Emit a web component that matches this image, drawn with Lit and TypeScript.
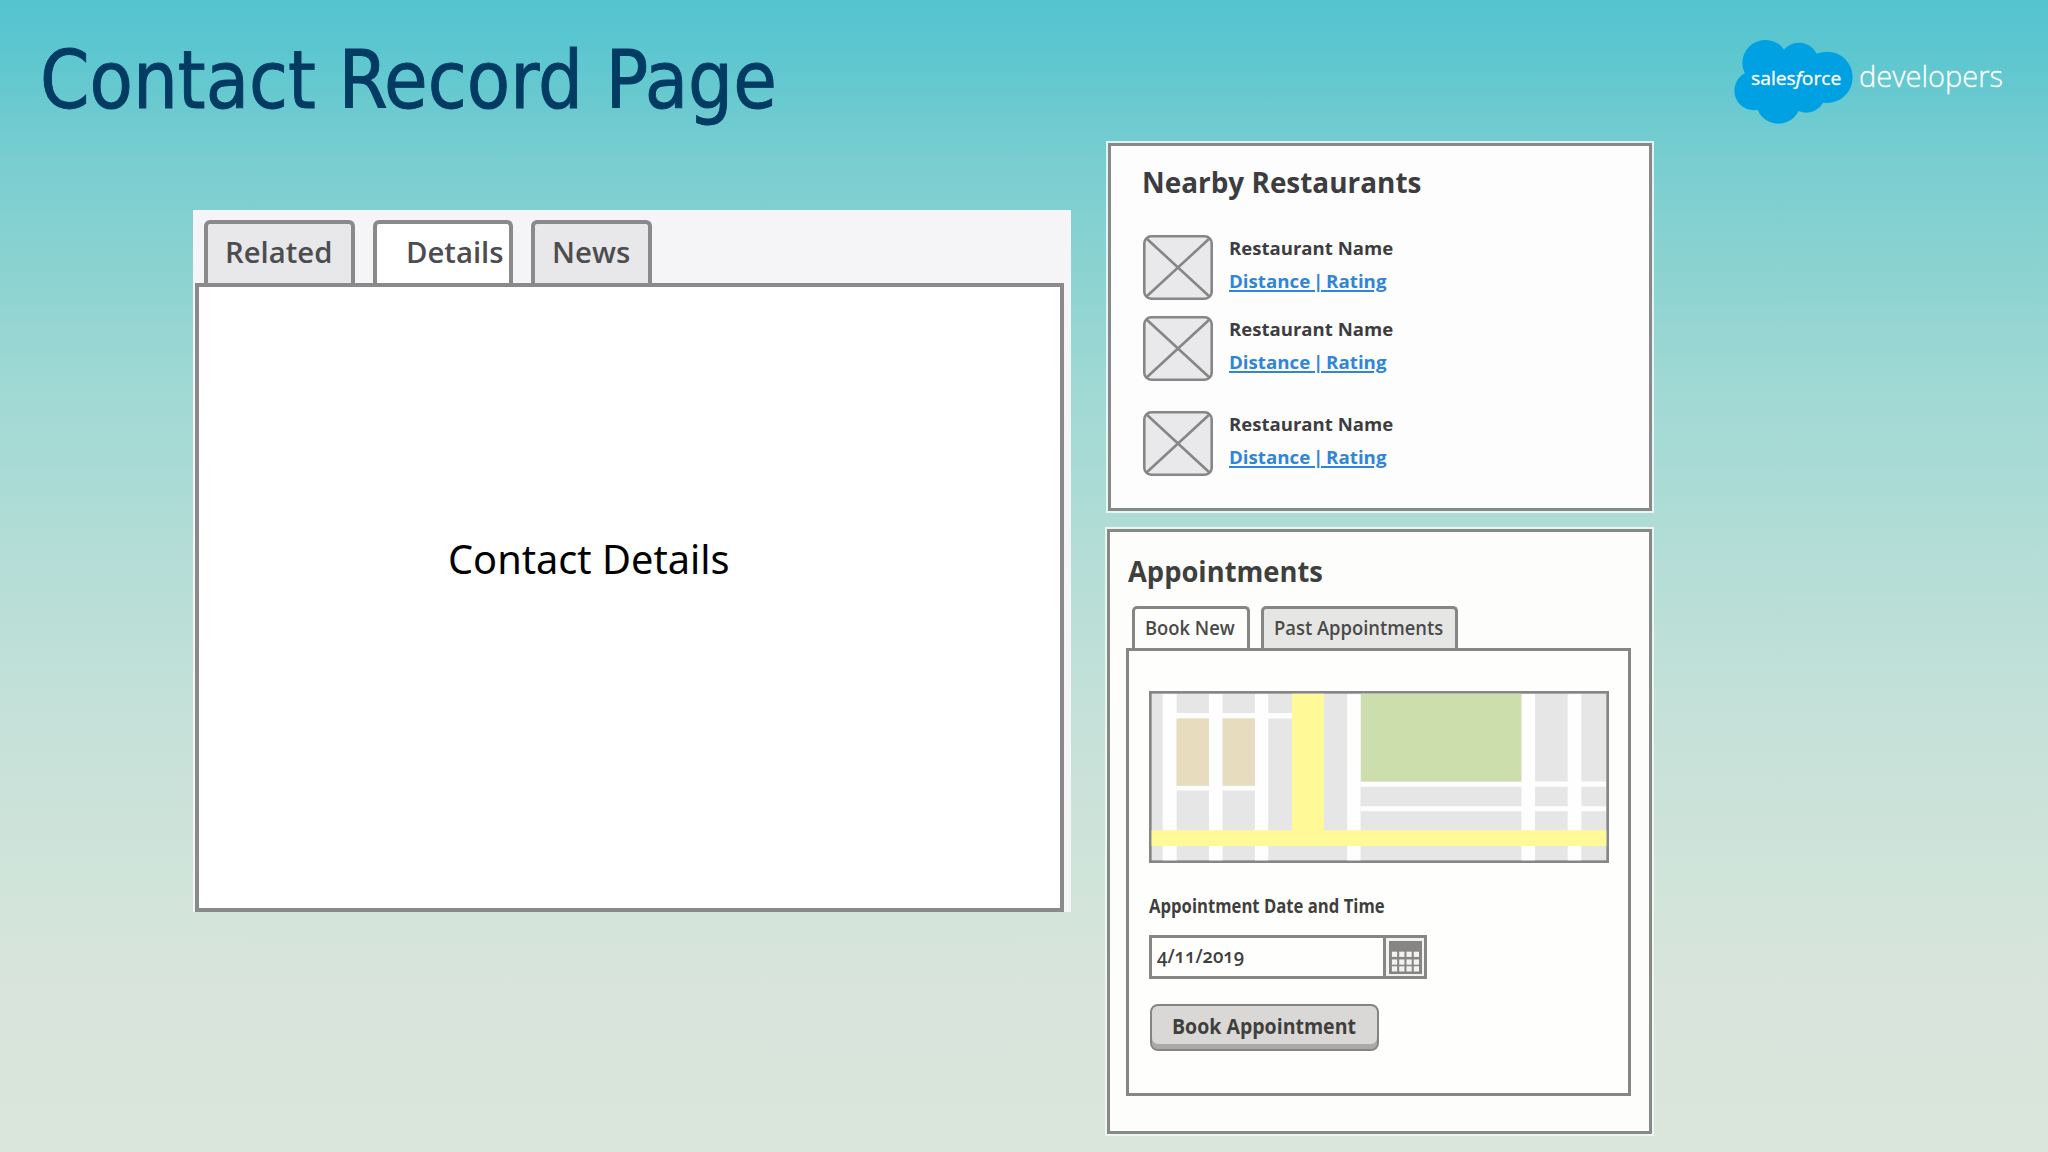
import { LitElement, html, svg, css } from "lit";
import { customElement, property } from "lit/decorators.js";

/** Single line of text, stretched horizontally to fill a given width. */
@customElement("fit-text")
class FitText extends LitElement {
  @property({ type: Number }) width = 100;
  @property() text = "";

  static styles = css`
    :host { display: block; white-space: pre; }
    .ink { display: inline-block; transform-origin: 0 50%; vertical-align: top; text-decoration: inherit; text-underline-offset: inherit; }
  `;

  updated() {
    const ink = this.renderRoot.querySelector(".ink") as HTMLElement;
    ink.style.transform = `scaleX(${this.width / ink.offsetWidth})`;
    this.style.width = `${this.width}px`;
  }

  render() {
    return html`<span class="ink">${this.text}</span>`;
  }
}

/** Salesforce Developers logo. */
@customElement("brand-logo")
class BrandLogo extends LitElement {
  static styles = css`
    :host { display: flex; }
    .cloud { display: block; width: 121px; height: 86px; }
    .shape { fill: #00a1e3; }
    .word { fill: #fff; stroke: #fff; stroke-width: 1; font: 500 57px "Open Sans", "Noto Sans", sans-serif; }
    .slant { font-style: italic; }
    .product { margin: 19px 0 0 5px; color: #fff; font: 300 29px/36px "Open Sans", "Noto Sans", sans-serif; -webkit-text-stroke: 0.3px #fff; }
  `;
  render() {
    return html`
      <svg class="cloud" viewBox="100 58 363 258">
        <g class="shape">
          <circle cx="197" cy="130" r="69" />
          <circle cx="298" cy="128" r="59" />
          <circle cx="382" cy="173" r="77" />
          <circle cx="163" cy="213" r="59" />
          <circle cx="236" cy="245" r="67" />
          <circle cx="320" cy="222" r="57" />
          <path d="M150 140L300 110L390 170L320 240L230 250L150 220Z" />
        </g>
        <text class="word" x="154" y="195" textLength="271" lengthAdjust="spacingAndGlyphs">sales<tspan class="slant">f</tspan>orce</text>
      </svg>
      <fit-text class="product" width="144" text="developers"></fit-text>
    `;
  }
}

/** Record card with the Related / Details / News tabs. */
@customElement("record-tabs")
class RecordTabs extends LitElement {
  static styles = css`
    :host { display: flex; flex-direction: column; box-sizing: border-box; width: 878px; height: 702px; padding: 10px 7px 0 2px; background: #f5f4f7; }
    .tabs { display: flex; padding-left: 9px; height: 63px; }
    .tab { box-sizing: border-box; height: 63px; border: 4px solid #8a8a8b; border-bottom: 0; border-radius: 6px 6px 0 0; background: #e8e7ea; color: #4d4d50; font: 600 29px/36px "Open Sans", "Noto Sans", sans-serif; padding-top: 10px; }
    .related { width: 151px; padding-left: 17px; }
    .details { width: 140px; margin-left: 18px; padding-left: 29px; background: #fff; }
    .news { width: 121px; margin-left: 18px; padding-left: 17px; }
    .panel { box-sizing: border-box; flex: 1; border: 4px solid #8a8a8b; background: #fff; color: #000; font: 400 40px/50px "Noto Sans", sans-serif; padding: 247px 0 0 249px; }
  `;
  render() {
    return html`
      <div class="tabs">
        <div class="tab related"><fit-text width="107" text="Related"></fit-text></div>
        <div class="tab details"><fit-text width="98" text="Details"></fit-text></div>
        <div class="tab news"><fit-text width="78" text="News"></fit-text></div>
      </div>
      <div class="panel"><fit-text width="282" text="Contact Details"></fit-text></div>
    `;
  }
}

@customElement("nearby-restaurants")
class NearbyRestaurants extends LitElement {
  static styles = css`
    :host { display: block; box-sizing: border-box; width: 544px; height: 368px; border: 3px solid #89898a; box-shadow: 0 0 0 2px rgba(240, 250, 250, 0.85); background: #fdfdfe; padding: 18px 0 0 32px; font-family: "Open Sans", "Noto Sans", sans-serif; }
    .title { color: #3d3d3f; font-size: 28px; font-weight: 700; line-height: 36px; margin: 0 0 35px -1px; }
    .row { display: flex; gap: 16px; height: 65px; margin-bottom: 16px; }
    .row.spaced { margin-top: 30px; }
    .thumb { display: block; width: 70px; height: 65px; margin-left: -0.5px; }
    .box { fill: #e9e8ea; stroke: #868687; stroke-width: 2.6; }
    .cross { stroke: #868687; stroke-width: 2.6; }
    .name { color: #3d3d3f; font-size: 18px; font-weight: 700; line-height: 26px; }
    .link { color: #2f86d6; font-size: 18px; font-weight: 700; line-height: 26px; margin-top: 7px; word-spacing: -2px; text-decoration: underline 1.6px; text-underline-offset: 2px; }
    .copy { display: flex; flex-direction: column; }
  `;
  render() {
    return html`
      <fit-text class="title" width="279" text="Nearby Restaurants"></fit-text>
      ${[false, false, true].map(
        (spaced) => html`
          <div class="row ${spaced ? "spaced" : ""}">
            <svg class="thumb" viewBox="0 0 70 65">
              <rect class="box" x="1.3" y="1.3" width="67.4" height="62.4" rx="7" />
              <path class="cross" d="M3 3L67 62M67 3L3 62" />
            </svg>
            <div class="copy">
              <fit-text class="name" width="164" text="Restaurant Name"></fit-text>
              <fit-text class="link" width="158" text="Distance | Rating"></fit-text>
            </div>
          </div>
        `
      )}
    `;
  }
}

@customElement("street-map")
class StreetMap extends LitElement {
  static styles = css`
    :host { display: block; }
    .map { display: block; width: 460px; height: 172px; }
    .land { fill: #e7e6e6; stroke: #868686; stroke-width: 8; }
    .street { fill: #fefefe; }
    .avenue { fill: #fff998; }
    .block { fill: #e7dcbe; }
    .park { fill: #ccdeab; }
  `;
  render() {
    const streets = [[96, 42], [235, 41], [373, 40], [650, 40], [1173, 41], [1312, 41]];
    return html`
      <svg class="map" viewBox="55 63 1381 515" preserveAspectRatio="none">
        <rect class="land" x="59" y="67" width="1373" height="507" />
        ${streets.map(([x, w]) => svg`<rect class="street" x=${x} y="72" width=${w} height="498" />`)}
        <path class="street" d="M138 129H485V145H138ZM138 347H373V361H138ZM690 334H1427V350H690ZM690 408H1427V423H690Z" />
        <path class="block" d="M138 145H235V347H138ZM276 145H373V347H276Z" />
        <rect class="park" x="692" y="71" width="481" height="263" />
        <path class="avenue" d="M484 71H580V480H1428V527H63V480H484Z" />
      </svg>
    `;
  }
}

@customElement("appointments-card")
class AppointmentsCard extends LitElement {
  static styles = css`
    :host { display: block; box-sizing: border-box; width: 545px; height: 605px; border: 3px solid #868986; box-shadow: 0 0 0 2px rgba(240, 250, 246, 0.85); background: #fdfefc; font-family: "Open Sans", "Noto Sans", sans-serif; padding: 20px 0 0 16px; color: #3f3f3e; }
    .title { font-size: 29px; font-weight: 700; line-height: 38px; padding-left: 2px; }
    .tabs { display: flex; gap: 11px; padding: 16px 0 0 6px; height: 42px; }
    .tab { box-sizing: border-box; height: 42px; border: 3px solid #868686; border-bottom: 0; border-radius: 5px 5px 0 0; padding: 6px 0 0 10px; font-size: 20px; font-weight: 600; line-height: 26px; color: #4a4a4a; }
    .new { width: 118px; }
    .past { width: 197px; background: #e6e6e5; }
    .panel { box-sizing: border-box; width: 505px; height: 448px; border: 3px solid #868686; background: #fefefd; padding: 40px 0 0 20px; }
    .label { font-size: 19px; font-weight: 700; line-height: 26px; margin-top: 30px; }
    .field { display: flex; box-sizing: border-box; width: 278px; height: 44px; margin-top: 16px; border: 3px solid #868686; }
    .date { width: 231px; box-sizing: border-box; padding: 4px 0 0 5px; font-size: 20px; font-weight: 600; line-height: 28px; font-feature-settings: "onum" 1; }
    .picker { width: 38px; border-left: 3px solid #868686; background: #f2f2f1; display: flex; align-items: center; justify-content: center; }
    .calendar { display: block; width: 33px; height: 33px; }
    .frame { fill: #868584; }
    .cell { fill: #f2f2f1; }
    .button { display: flex; align-items: flex-start; box-sizing: border-box; width: 229px; height: 47px; margin: 25px 0 0 1px; border: 2.5px solid #868584; border-radius: 8px; background: #d9d8d7; box-shadow: inset 0 -5px 0 #aaa9a8; padding: 6px 0 0 20px; color: #3f3f3e; font-family: inherit; font-size: 21px; font-weight: 700; line-height: 28px; text-align: left; }
  `;
  render() {
    return html`
      <fit-text class="title" width="195" text="Appointments"></fit-text>
      <div class="tabs">
        <div class="tab new"><fit-text width="90" text="Book New"></fit-text></div>
        <div class="tab past"><fit-text width="169" text="Past Appointments"></fit-text></div>
      </div>
      <div class="panel">
        <street-map></street-map>
        <fit-text class="label" width="236" text="Appointment Date and Time"></fit-text>
        <div class="field">
          <div class="date"><fit-text width="87" text="4/11/2019"></fit-text></div>
          <div class="picker">
            <svg class="calendar" viewBox="0 0 34 34">
              <rect class="frame" width="34" height="34" />
              ${[11, 19, 26].map((y) => [3, 10.5, 18, 25.5].map((x) => svg`<rect class="cell" x=${x} y=${y} width="5.4" height="5.4" />`))}
            </svg>
          </div>
        </div>
        <button class="button"><fit-text width="184" text="Book Appointment"></fit-text></button>
      </div>
    `;
  }
}

@customElement("app-root")
class AppRoot extends LitElement {
  static styles = css`
    :host { display: block; }
    .slide { box-sizing: border-box; width: 2048px; height: 1152px; overflow: hidden; background: linear-gradient(#54c4cf 0%, #5bc6cf 4%, #7bced0 15%, #8fd4d1 25.5%, #9fd8d4 33%, #afdcd6 45%, #bbdfd7 54%, #c7e1d9 64%, #d0e4da 76.5%, #d9e4dc 86%, #dae5dc 100%); }
    .header { display: flex; justify-content: space-between; box-sizing: border-box; height: 140px; padding: 39px 45px 0 40px; }
    .title { margin-top: 2px; color: #033b63; font: 400 80px/80px "DejaVu Sans Condensed", "DejaVu Sans", sans-serif; font-stretch: condensed; -webkit-text-stroke: 0.9px #033b63; }
    .columns { display: flex; padding-left: 193px; }
    .record { margin-top: 70px; }
    .side { display: flex; flex-direction: column; padding: 3px 0 0 36px; }
    .nearby { margin-left: 1px; }
    .appointments { margin-top: 18px; }
  `;
  render() {
    return html`
      <div class="slide">
        <div class="header">
          <fit-text class="title" width="737" text="Contact Record Page"></fit-text>
          <brand-logo></brand-logo>
        </div>
        <div class="columns">
          <record-tabs class="record"></record-tabs>
          <div class="side">
            <nearby-restaurants class="nearby"></nearby-restaurants>
            <appointments-card class="appointments"></appointments-card>
          </div>
        </div>
      </div>
    `;
  }
}
